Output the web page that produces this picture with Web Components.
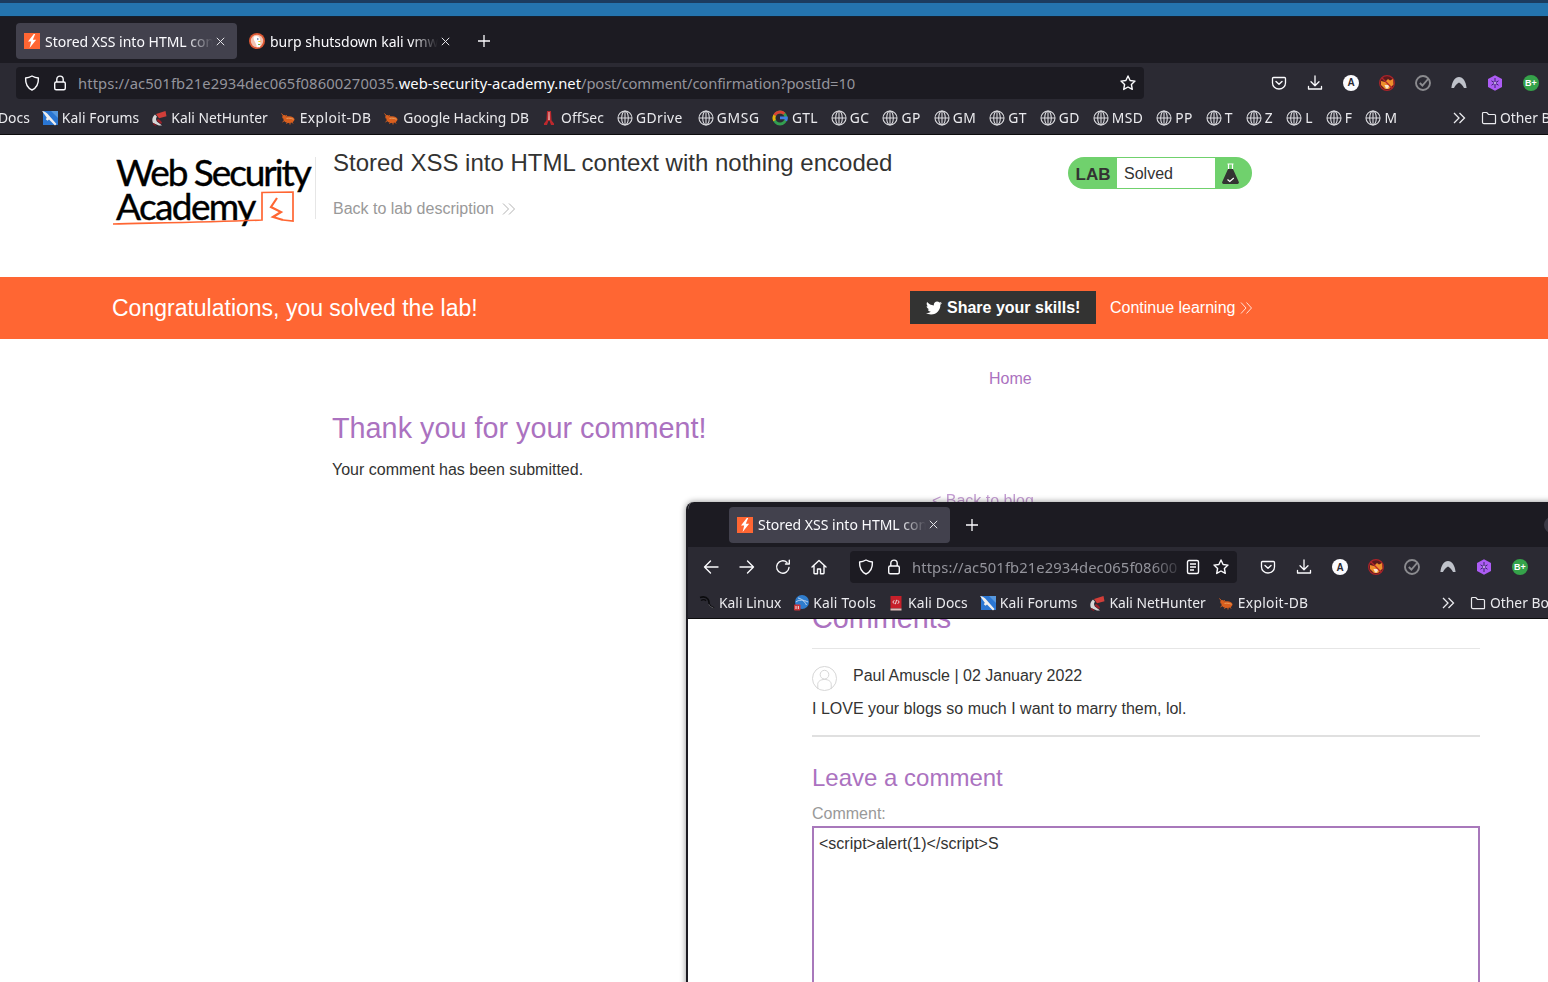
<!DOCTYPE html>
<html lang="en">
<head>
<meta charset="utf-8">
<title>Stored XSS into HTML context with nothing encoded</title>
<style>
  html, body { margin: 0; height: 100%; overflow: hidden; background: #fff; }
  body { position: relative; display: flex; flex-direction: column; width: 1548px; height: 982px; font-family: "Liberation Sans", Arial, sans-serif; color: #333332; }
  .s1 { letter-spacing: .1px; }
  .s2 { letter-spacing: .2px; }
  .s3 { letter-spacing: .3px; }
  .s4 { letter-spacing: .4px; }
</style>
</head>
<body>

<desk-strip></desk-strip>

<fx-window class="main" other="Other B" style="--tabs-left:16px;--tabs-h:46px;--tabs-top:2px;--nav-h:38px;--nav-top:1px;--marks-h:34px;--nav-left:16px;--url-w:1128px;--tools-left:127px;--marks-left:-2px;--marks-w:1453px;--folder-gap:3px;">
  <fx-tab slot="tabs" active icon="burp" label="Stored XSS into HTML con"></fx-tab>
  <fx-tab slot="tabs" icon="duck" label="burp shutsdown kali vmw"></fx-tab>
  <fx-url slot="url" base="https://ac501fb21e2934dec065f08600270035." host="web-security-academy.net" path="/post/comment/confirmation?postId=10"></fx-url>
  <fx-mark slot="marks" label="Docs"></fx-mark>
  <fx-mark slot="marks" class="s1" icon="forums" label="Kali Forums"></fx-mark>
  <fx-mark slot="marks" icon="nethunter" label="Kali NetHunter"></fx-mark>
  <fx-mark slot="marks" class="s4" icon="exploit" label="Exploit-DB"></fx-mark>
  <fx-mark slot="marks" icon="exploit" label="Google Hacking DB"></fx-mark>
  <fx-mark slot="marks" class="s1" icon="offsec" label="OffSec"></fx-mark>
  <fx-mark slot="marks" icon="globe" label="GDrive"></fx-mark>
  <fx-mark slot="marks" icon="globe" label="GMSG" style="margin-left:3px;letter-spacing:.7px"></fx-mark>
  <fx-mark slot="marks" class="s3" icon="google" label="GTL"></fx-mark>
  <fx-mark slot="marks" icon="globe" label="GC"></fx-mark>
  <fx-mark slot="marks" icon="globe" label="GP"></fx-mark>
  <fx-mark slot="marks" icon="globe" label="GM"></fx-mark>
  <fx-mark slot="marks" icon="globe" label="GT"></fx-mark>
  <fx-mark slot="marks" icon="globe" label="GD"></fx-mark>
  <fx-mark slot="marks" icon="globe" label="MSD"></fx-mark>
  <fx-mark slot="marks" icon="globe" label="PP"></fx-mark>
  <fx-mark slot="marks" icon="globe" label="T"></fx-mark>
  <fx-mark slot="marks" icon="globe" label="Z"></fx-mark>
  <fx-mark slot="marks" icon="globe" label="L"></fx-mark>
  <fx-mark slot="marks" icon="globe" label="F"></fx-mark>
  <fx-mark slot="marks" icon="globe" label="M"></fx-mark>

  <lab-header title-text="Stored XSS into HTML context with nothing encoded"></lab-header>
  <lab-banner></lab-banner>
  <blog-confirmation></blog-confirmation>
</fx-window>

<fx-window class="popup" controls other="Other Bo" style="position:absolute;left:686px;top:502px;width:920px;height:520px;--tabs-left:41px;--tabs-h:45px;--tabs-top:0px;--nav-h:40px;--nav-top:0px;--marks-h:32px;--nav-left:6px;--url-w:387px;--tools-left:23px;--marks-left:11px;--marks-w:741px;--folder-gap:4px;--edge:2px;--radius:8px;">
  <fx-tab slot="tabs" active icon="burp" label="Stored XSS into HTML con"></fx-tab>
  <fx-nav slot="nav"></fx-nav>
  <fx-url slot="url" reader base="https://ac501fb21e2934dec065f08600" host="" path=""></fx-url>
  <fx-mark slot="marks" icon="kali" label="Kali Linux"></fx-mark>
  <fx-mark slot="marks" class="s2" icon="tools" label="Kali Tools"></fx-mark>
  <fx-mark slot="marks" class="s1" icon="docs" label="Kali Docs"></fx-mark>
  <fx-mark slot="marks" class="s1" icon="forums" label="Kali Forums"></fx-mark>
  <fx-mark slot="marks" icon="nethunter" label="Kali NetHunter"></fx-mark>
  <fx-mark slot="marks" class="s3" icon="exploit" label="Exploit-DB"></fx-mark>

  <blog-comments></blog-comments>
</fx-window>

<script>
// every icon lives here so fx-icon can stamp them by name
const ICONS = {
  burp: '<rect width="16" height="16" fill="#ff6633"/><path d="M9.8 1 4 8.600h3.200L5.600 15l6.600-8.200H8.800L11.200 1z" fill="#fff"/>',
  duck: '<circle cx="8" cy="8" r="8" fill="#de5833"/><circle cx="8" cy="8" r="6.200" fill="#f4c4b2"/><path d="M5 3.600c2-1.200 5-.7 5.800 1.700.5 1.500.1 3 .6 4.600.3 1.200 0 3.100-.4 4.400H7.600c.2-1.800-.7-3.600-1.600-5.300C5 7 4 5 5 3.600z" fill="#fff"/><circle cx="8.800" cy="6" r=".8" fill="#2d4f8e"/><path d="M8.800 8.200c1-.4 2.300-.3 3.200 0-.3.9-1.800 1.100-3.200.4z" fill="#fdd20a"/><path d="M9 10.800c.7.300 1.600.300 2.200 0V12c-.8.100-1.600 0-2.200-.3z" fill="#65bc46"/>',
  globe: '<g fill="none" stroke="#e8e8ec" stroke-width="1.100"><circle cx="8" cy="8" r="7"/><ellipse cx="8" cy="8" rx="3.300" ry="7"/><path d="M8 1v14M1 8h14"/></g>',
  google: '<circle cx="8" cy="8" r="6" fill="none" stroke="#34a853" stroke-width="2.800"/><path d="M2.600 5.400A6 6 0 0 1 12.300 3.800" fill="none" stroke="#ea4335" stroke-width="2.800"/><path d="M2.500 10.600a6 6 0 0 1 .1-5.200" fill="none" stroke="#fbbc05" stroke-width="2.800"/><path d="M8 6.500h7.700c.3 1.700.1 3.300-.6 4.700l-2.500-1c.3-.4.400-.8.500-1H8z" fill="#4285f4"/>',
  forums: '<rect x="1" y="1" width="15" height="14" fill="#2a7de1"/><path d="M9 1h7v7z" fill="#5aa2ee"/><path d="M0 1c3 .4 5.300 2 6.800 4.300l7.700 8.700-1.500 1.500-6-6-1.500 1.300-1.700-1.600 1-1.400C3.500 5.700 1.600 3.500 0 1z" fill="#fff"/>',
  nethunter: '<path d="M5 4 14.500 1l1 5.200L8 8.200z" fill="#e0403a"/><path d="M4 4.500C1.500 6.500.5 10 2 13l6 2.500h3l-4.500-3.500C4.800 10.500 4.500 8 6 6.800z" fill="#e6e6e6"/><path d="M6.500 9c1.500 0 3 1.200 4.500 3.500l-1 1.500L6 11z" fill="#a81f28"/><path d="M2 13.500 5 15.500" stroke="#8c1820" stroke-width="1.500"/>',
  exploit: '<g fill="#e8641d"><ellipse cx="9" cy="9.600" rx="5.500" ry="3.300"/><circle cx="4.200" cy="7" r="2"/></g><path d="M1.500 3.500l2.500 3M2.500 12l2.500-2M6.500 13.800l1.500-2M10 14.500V12.500M13 13.500l-1.500-2M6 5l1.500 2.500" stroke="#e8641d" stroke-width="1" fill="none"/><path d="M6.500 8.500c2.500-.6 4.500-.3 7 .8" stroke="#f7a65f" fill="none"/>',
  offsec: '<path d="M6 1h4l.6 9.500 2.400 3V15h-3L8.600 11H7.400L6 15H3v-1.500l2.400-3z" fill="#c9282d"/><path d="M7.400 2h1.200l.3 8H7.100z" fill="#f4a8a2"/>',
  kali: '<path d="M1 2.500c3-1 6.500-.3 8 1.700 1.300 1.700.8 3.500 1.300 5 .6 1.500 2.200 2.600 4.700 3.800" fill="none" stroke="#09090b" stroke-width="1.600"/><path d="M2 5.500c1.600-1 3.800-1 5 .2" fill="none" stroke="#09090b" stroke-width="1.300"/><path d="M9.800 9.300c.6 1.500 2.200 2.800 4.700 3.800" fill="none" stroke="#77777d" stroke-width=".8"/>',
  tools: '<circle cx="9" cy="7" r="7" fill="#3085dc"/><path d="M3 7c3-2.500 7-2.500 12 0M5 3c3 .5 6 2.500 8.500 7" stroke="#cfe6ff" fill="none"/><rect x="1" y="9.500" width="6.500" height="6" rx="1" fill="#d9343a"/><path d="M3 11v3M5.300 11v3" stroke="#fff"/>',
  docs: '<rect x="2.500" y="1" width="11" height="12.500" fill="#d5202a"/><rect x="2.500" y="13.500" width="11" height="2" fill="#f0c9c4"/><path d="M6.300 5.200 4.800 7l1.500 1.800M9.700 5.200 11.200 7 9.700 8.800M8.600 4.800 7.400 9.200" stroke="#fff" fill="none" stroke-width=".9"/>',
  pocket: '<path d="M2.500 2.500h11a1 1 0 0 1 1 1V8a6.500 6 0 0 1-13 0V3.500a1 1 0 0 1 1-1z" fill="none" stroke="#fbfbfe" stroke-width="1.300"/><path d="M5 6.500 8 9.300l3-2.800" fill="none" stroke="#fbfbfe" stroke-width="1.400" stroke-linecap="round" stroke-linejoin="round"/>',
  download: '<path d="M8 1v9.500M4 6.800 8 10.800l4-4M1.500 11.500V14h13v-2.500" fill="none" stroke="#fbfbfe" stroke-width="1.300" stroke-linecap="round" stroke-linejoin="round"/>',
  badgeWhite: '<circle cx="8" cy="8" r="8" fill="#fbfbfe"/>',
  fox: '<circle cx="8" cy="8" r="7.400" fill="#5a1a1c" stroke="#a9242b" stroke-width="1.200"/><path d="M2 6 6 7l3-3 2 1.500L14 4l.5 5.500L10 14H6L2 10z" fill="#ee8f2c"/><path d="M5.500 10h5L9 13.500H7z" fill="#f8e6cc"/><path d="M3 3 13 13" stroke="#b3252c" stroke-width="1.300"/>',
  check: '<circle cx="8" cy="8" r="7" fill="none" stroke="#8b8b8f" stroke-width="1.900"/><path d="M4.800 8 7.400 10.500 13.500 3.500" fill="none" stroke="#8b8b8f" stroke-width="1.900"/>',
  arch: '<path d="M.4 13C1 6.500 4 2 8 2s7 4.500 7.600 11H13C11.800 10.500 10 8.600 8 7.600 6 8.600 4.200 10.500 3 13z" fill="#bfc2ca"/>',
  hex: '<path d="M8 .3 15 4.100v7.800L8 15.700 1 11.900V4.100z" fill="#ad5cf5"/><path d="M8 3v10M4.500 5.800l7 4.400M11.500 5.800l-7 4.400" stroke="#3a2a66" stroke-width="1" fill="none"/><circle cx="8" cy="8" r="1" fill="#e2c8ff"/>',
  badgeGreen: '<circle cx="8" cy="8" r="8" fill="#35a24a"/>'
};

function svg(name, size) {
  return `<svg xmlns="http://www.w3.org/2000/svg" viewBox="0 0 16 16" width="${size}" height="${size}">${ICONS[name] || ''}</svg>`;
}

class DeskStrip extends HTMLElement {
  constructor() {
    super();
    this.attachShadow({ mode: 'open' });
    this.shadowRoot.innerHTML = `
      <style>
        :host { display: block; height: 17px; flex: none; box-sizing: border-box; background: #2474ae; border-top: 3px solid #1c3c5e; border-bottom: 1px solid #14202e; }
      </style>`;
  }
}

class FxIcon extends HTMLElement {
  connectedCallback() {
    const root = this.shadowRoot || this.attachShadow({ mode: 'open' });
    root.innerHTML = `
      <style>
        :host { display: inline-flex; flex: none; position: relative; align-items: center; justify-content: center; }
        svg { display: block; }
      </style>
      ${svg(this.getAttribute('name'), this.getAttribute('size') || 16)}<slot></slot>`;
  }
}

class FxWindow extends HTMLElement {
  constructor() {
    super();
    this.attachShadow({ mode: 'open' });
    this.shadowRoot.innerHTML = `
      <style>
        :host {
          display: flex;
          flex-direction: column;
          font-family: "Noto Sans", sans-serif;
          overflow: hidden;
          background: #fff;
          box-sizing: border-box;
          border-left: var(--edge, 0) solid #1c1b22;
          border-top-left-radius: var(--radius, 0);
          border-top-right-radius: var(--radius, 0);
        }
        :host(.popup) { box-shadow: 0 0 6px rgba(0,0,0,.45); }
        :host(.main) { flex: 1; min-height: 0; }
        #tabs {
          display: flex;
          align-items: center;
          gap: 4px;
          height: var(--tabs-h);
          box-sizing: border-box;
          padding: var(--tabs-top) 0 0 var(--tabs-left);
          background: #1c1b22;
          flex: none;
          position: relative;
        }
        #plus { margin-left: 6px; width: 24px; height: 24px; display: grid; place-items: center; }
        #nav {
          display: flex;
          align-items: center;
          height: var(--nav-h);
          box-sizing: border-box;
          padding: var(--nav-top) 0 0 var(--nav-left);
          background: #2b2a33;
          flex: none;
        }
        #urlslot { display: block; width: var(--url-w); flex: none; }
        #marks {
          display: flex;
          align-items: center;
          height: var(--marks-h);
          box-sizing: border-box;
          background: #2b2a33;
          flex: none;
          border-bottom: 1px solid #0c0c0d;
          overflow: hidden;
        }
        #marklist {
          display: flex;
          align-items: center;
          gap: 12px;
          width: var(--marks-w);
          margin-left: var(--marks-left);
          flex: none;
          box-sizing: border-box;
          overflow: hidden;
        }
        #other { display: flex; align-items: center; flex: none; color: #fbfbfe; font-size: 13.850px; white-space: nowrap; opacity: .92; }
        #other svg { display: block; }
        #more { margin-right: 14px; }
        #folder { margin-right: var(--folder-gap); }
        #page { flex: 1; min-height: 0; overflow: hidden; background: #fff; color: #333332; font-family: "Liberation Sans", Arial, sans-serif; }
        #control { position: absolute; left: 856px; top: 15px; width: 16px; height: 16px; border-radius: 50%; background: #3a3944; }
        #control[hidden] { display: none; }
      </style>
      <div id="tabs">
        <slot name="tabs"></slot>
        <div id="plus">
          <svg width="14" height="14" viewBox="0 0 14 14"><path d="M7 1v12M1 7h12" stroke="#fbfbfe" stroke-width="1.300"/></svg>
        </div>
        <div id="control" hidden></div>
      </div>
      <div id="nav">
        <slot name="nav"></slot>
        <div id="urlslot"><slot name="url"></slot></div>
        <fx-tools></fx-tools>
      </div>
      <div id="marks">
        <div id="marklist"><slot name="marks"></slot></div>
        <div id="other">
          <svg id="more" width="16" height="16" viewBox="0 0 16 16"><path d="M3 3l5 5-5 5M8.500 3l5 5-5 5" fill="none" stroke="#fbfbfe" stroke-width="1.300"/></svg>
          <svg id="folder" width="16" height="16" viewBox="0 0 16 16"><path d="M1.500 12V3.500a1 1 0 0 1 1-1h3.300l1.700 2h6a1 1 0 0 1 1 1V13a.7.7 0 0 1-.7.7H3a1.500 1.500 0 0 1-1.500-1.700z" fill="none" stroke="#fbfbfe" stroke-width="1.200"/></svg>
          <span id="otherlabel"></span>
        </div>
      </div>
      <div id="page"><slot></slot></div>`;
  }
  connectedCallback() {
    if (this.hasAttribute('controls')) this.shadowRoot.getElementById('control').hidden = false;
    this.shadowRoot.getElementById('otherlabel').textContent = this.getAttribute('other');
  }
}

class FxTab extends HTMLElement {
  connectedCallback() {
    const root = this.shadowRoot || this.attachShadow({ mode: 'open' });
    root.innerHTML = `
      <style>
        :host {
          display: flex;
          align-items: center;
          width: 221px;
          height: 36px;
          box-sizing: border-box;
          padding: 0 12px 0 8px;
          border-radius: 4px;
          color: #fbfbfe;
          font-size: 14px;
          flex: none;
        }
        :host([active]) { background: #42414d; }
        #title {
          flex: 1;
          min-width: 0;
          margin-left: 5px;
          white-space: nowrap;
          -webkit-mask-image: linear-gradient(to right, #000 84%, transparent);
          mask-image: linear-gradient(to right, #000 84%, transparent);
        }
        svg#x { display: block; margin-left: 3px; flex: none; }
      </style>
      <fx-icon name="${this.getAttribute('icon')}"></fx-icon>
      <span id="title">${this.getAttribute('label')}</span>
      <svg id="x" width="9" height="9" viewBox="0 0 9 9"><path d="M.8.8l7.400 7.400M8.200.8.800 8.200" stroke="#e4e4e8" stroke-width="1"/></svg>`;
  }
}

class FxNav extends HTMLElement {
  constructor() {
    super();
    this.attachShadow({ mode: 'open' });
    this.shadowRoot.innerHTML = `
      <style>
        :host { display: flex; align-items: center; gap: 20px; padding: 0 23px 0 9px; flex: none; }
        svg { display: block; fill: none; stroke: #fbfbfe; stroke-width: 1.400; stroke-linecap: round; stroke-linejoin: round; }
      </style>
      <svg width="16" height="16" viewBox="0 0 16 16"><path d="M15 8H1.500M7.500 2 1.500 8l6 6"/></svg>
      <svg width="16" height="16" viewBox="0 0 16 16"><path d="M1 8h13.500M8.500 2l6 6-6 6"/></svg>
      <svg width="16" height="16" viewBox="0 0 16 16"><path d="M14 8.500A6.200 6.200 0 1 1 12 3.400M14.300 1.200V5H10.500"/></svg>
      <svg width="16" height="16" viewBox="0 0 16 16"><path d="M1 8 8 1.500 15 8M3 6.500V14a.7.7 0 0 0 .7.700H6.500V10h3v4.700h2.800A.7.7 0 0 0 13 14V6.500"/></svg>`;
  }
}

class FxUrl extends HTMLElement {
  connectedCallback() {
    const root = this.shadowRoot || this.attachShadow({ mode: 'open' });
    const reader = this.hasAttribute('reader');
    root.innerHTML = `
      <style>
        :host {
          display: flex;
          align-items: center;
          height: 32px;
          background: #1c1b22;
          border-radius: 4px;
          color: #94949c;
          font-size: 14.770px;
          box-sizing: border-box;
          padding: 0 8px;
        }
        svg { display: block; flex: none; fill: none; stroke: #fbfbfe; stroke-width: 1.400; stroke-linejoin: round; }
        #lock { margin-left: 12px; }
        #text {
          flex: 1;
          min-width: 0;
          margin-left: 10px;
          white-space: nowrap;
          ${reader ? '-webkit-mask-image: linear-gradient(to right, #000 88%, transparent); mask-image: linear-gradient(to right, #000 88%, transparent);' : ''}
        }
        #base { letter-spacing: .1px; }
        #host { color: #fbfbfe; letter-spacing: .04px; }
        #path { letter-spacing: -.14px; }
        #reader { margin-right: 12px; }
      </style>
      <svg width="16" height="16" viewBox="0 0 16 16"><path d="M8 1c2.200 1.200 4.300 1.800 6.400 2 .2 5.500-1.500 9.800-6.400 12C3.100 12.800 1.400 8.500 1.600 3 3.700 2.800 5.800 2.200 8 1z"/></svg>
      <svg id="lock" width="16" height="16" viewBox="0 0 16 16"><rect x="2.700" y="7" width="10.600" height="7.800" rx="1.500"/><path d="M4.800 7V4.300a3.200 3.200 0 0 1 6.400 0V7"/></svg>
      <span id="text"><span id="base">${this.getAttribute('base')}</span><span id="host">${this.getAttribute('host')}</span><span id="path">${this.getAttribute('path')}</span></span>
      ${reader ? '<svg id="reader" width="16" height="16" viewBox="0 0 16 16"><rect x="2.500" y="1.500" width="11" height="13" rx="1.500"/><path d="M5 5h6M5 8h6M5 11h4"/></svg>' : ''}
      <svg width="16" height="16" viewBox="0 0 16 16"><path d="M8 1l2.100 4.500 4.900.6-3.600 3.400.9 4.900L8 12l-4.300 2.400.9-4.900L1 6.100l4.900-.6z"/></svg>`;
  }
}

class FxTools extends HTMLElement {
  constructor() {
    super();
    this.attachShadow({ mode: 'open' });
    this.shadowRoot.innerHTML = `
      <style>
        :host { display: flex; align-items: center; gap: 20px; padding-left: var(--tools-left); flex: none; }
        span { position: absolute; inset: 0; display: grid; place-items: center; font: 700 9px "Liberation Sans", sans-serif; }
        .a { color: #2b2a33; font-size: 10px; }
        .b { color: #fff; }
      </style>
      <fx-icon name="pocket"></fx-icon>
      <fx-icon name="download"></fx-icon>
      <fx-icon name="badgeWhite"><span class="a">A</span></fx-icon>
      <fx-icon name="fox"></fx-icon>
      <fx-icon name="check"></fx-icon>
      <fx-icon name="arch"></fx-icon>
      <fx-icon name="hex"></fx-icon>
      <fx-icon name="badgeGreen"><span class="b">B+</span></fx-icon>`;
  }
}

class FxMark extends HTMLElement {
  connectedCallback() {
    const root = this.shadowRoot || this.attachShadow({ mode: 'open' });
    const icon = this.getAttribute('icon');
    root.innerHTML = `
      <style>
        :host { display: flex; align-items: center; gap: 4px; color: #fbfbfe; font-size: 13.850px; white-space: nowrap; flex: none; opacity: .92; }
        :host([icon="globe"]) { gap: 3px; margin-left: 1px; letter-spacing: .4px; }
      </style>
      ${icon ? `<fx-icon name="${icon}"></fx-icon>` : ''}
      <span>${this.getAttribute('label')}</span>`;
  }
}

class LabHeader extends HTMLElement {
  connectedCallback() {
    const root = this.shadowRoot || this.attachShadow({ mode: 'open' });
    root.innerHTML = `
      <style>
        :host { display: flex; height: 142px; flex: none; padding: 14px 0 0 112px; box-sizing: border-box; background: #fff; }
        #logo {
          position: relative;
          width: 204px;
          height: 78px;
          box-sizing: border-box;
          flex: none;
          font: 400 37px/35px Lato, sans-serif;
          -webkit-text-stroke: .4px #000;
          color: #000;
          padding: 5px 0 0 4px;
        }
        #logo div { white-space: nowrap; }
        #w1 { letter-spacing: -2.050px; }
        #w2 { letter-spacing: -1.600px; margin-top: -1px; }
        #rule { position: absolute; right: 0; top: 8px; width: 1px; height: 62px; background: #e6e6e6; }
        #mark { position: absolute; left: 0; top: 40px; }
        #titles { width: 752px; padding-left: 17px; box-sizing: border-box; flex: none; }
        h2 { margin: 0; font-size: 24px; font-weight: 400; line-height: 28px; color: #333332; white-space: nowrap; }
        #back { margin-top: 23px; display: flex; align-items: center; gap: 8px; color: #999; font-size: 16px; line-height: 18px; }
        #back svg { display: block; }
      </style>
      <div id="logo">
        <div id="w1">Web Security</div>
        <div id="w2">Academy</div>
        <i id="rule"></i>
        <svg id="mark" width="190" height="40" viewBox="0 0 190 40">
          <path d="M1 35C40 34 100 33 150 31V3.500L181 3v29l-10-1" fill="none" stroke="#ff6633" stroke-width="1.700"/>
          <path d="M165 9l-6 9 10 5-8 5 10 3" fill="none" stroke="#ff6633" stroke-width="2.200"/>
        </svg>
      </div>
      <div id="titles">
        <h2>${this.getAttribute('title-text')}</h2>
        <div id="back">Back to lab description
          <svg width="14" height="14" viewBox="0 0 14 14"><path d="M1 1.500 6.500 7 1 12.500M7 1.500 12.500 7 7 12.500" fill="none" stroke="#b3b3b3" stroke-width="1"/></svg>
        </div>
      </div>
      <lab-status></lab-status>`;
  }
}

class LabStatus extends HTMLElement {
  constructor() {
    super();
    this.attachShadow({ mode: 'open' });
    this.shadowRoot.innerHTML = `
      <style>
        :host {
          display: flex;
          align-items: stretch;
          align-self: flex-start;
          width: 184px;
          height: 32px;
          margin-top: 8px;
          box-sizing: border-box;
          border-radius: 16px;
          background: #70d16d;
          padding: 1px 0;
          overflow: hidden;
          flex: none;
        }
        #lab { width: 49px; text-align: center; font-weight: 700; font-size: 17px; line-height: 33px; color: #333332; padding-left: 1px; box-sizing: border-box; }
        #state { width: 98px; background: #fff; padding-left: 7px; box-sizing: border-box; font-size: 16px; line-height: 31px; color: #333332; }
        #flask { flex: 1; display: flex; align-items: center; padding-left: 7px; }
        svg { display: block; }
      </style>
      <div id="lab">LAB</div>
      <div id="state">Solved</div>
      <div id="flask">
        <svg width="17" height="21" viewBox="0 0 17 21">
          <path d="M5.500 1h6M6.500 1v6M10.500 1v6" stroke="#fff" stroke-width="1.200" fill="none"/>
          <path d="M6 6h5l5.700 12.800A1.500 1.500 0 0 1 15.300 21H1.700A1.500 1.500 0 0 1 .3 18.800z" fill="#333332"/>
          <path d="M5.500 16.500l2.300 2 4-3.500" stroke="#fff" stroke-width="1.200" fill="none"/>
        </svg>
      </div>`;
  }
}

class LabBanner extends HTMLElement {
  constructor() {
    super();
    this.attachShadow({ mode: 'open' });
    this.shadowRoot.innerHTML = `
      <style>
        :host {
          display: flex;
          align-items: center;
          height: 62px;
          flex: none;
          padding-left: 112px;
          background: #ff6633;
          color: #fff;
          box-sizing: border-box;
        }
        h4 { margin: 0; width: 798px; font-size: 23px; font-weight: 400; flex: none; white-space: nowrap; }
        #share {
          display: flex;
          align-items: center;
          gap: 5px;
          width: 186px;
          height: 33px;
          margin-top: -1px;
          box-sizing: border-box;
          padding-left: 16px;
          background: #333332;
          font-size: 16px;
          font-weight: 700;
          flex: none;
        }
        #more { display: flex; align-items: center; gap: 5px; margin-left: 14px; font-size: 16px; }
        svg { display: block; }
      </style>
      <h4>Congratulations, you solved the lab!</h4>
      <div id="share">
        <svg width="16" height="16" viewBox="0 0 512 512"><path fill="#fff" d="M459.37 151.716c.325 4.548.325 9.097.325 13.645 0 138.72-105.583 298.558-298.558 298.558-59.452 0-114.68-17.219-161.137-47.106 8.447.974 16.568 1.299 25.34 1.299 49.055 0 94.213-16.568 130.274-44.832-46.132-.975-84.792-31.188-98.112-72.772 6.498.974 12.995 1.624 19.818 1.624 9.421 0 18.843-1.3 27.614-3.573-48.081-9.747-84.143-51.98-84.143-102.985v-1.299c13.969 7.797 30.214 12.67 47.431 13.319-28.264-18.843-46.781-51.005-46.781-87.391 0-19.492 5.197-37.36 14.294-52.954 51.655 63.675 129.3 105.258 216.365 109.807-1.624-7.797-2.599-15.918-2.599-24.04 0-57.828 46.782-104.934 104.934-104.934 30.213 0 57.502 12.67 76.67 33.137 23.715-4.548 46.456-13.32 66.599-25.34-7.798 24.366-24.366 44.833-46.132 57.827 21.117-2.273 41.584-8.122 60.426-16.243-14.292 20.791-32.161 39.308-52.628 54.253z"/></svg>
        Share your skills!
      </div>
      <div id="more">Continue learning
        <svg width="13" height="14" viewBox="0 0 13 14"><path d="M1 1.500 6 7l-5 5.500M6.500 1.500 11.500 7l-5 5.500" fill="none" stroke="#fff" stroke-opacity=".8" stroke-width="1"/></svg>
      </div>`;
  }
}

class BlogConfirmation extends HTMLElement {
  constructor() {
    super();
    this.attachShadow({ mode: 'open' });
    this.shadowRoot.innerHTML = `
      <style>
        :host { display: block; font-size: 16px; padding-left: 332px; width: 1300px; box-sizing: border-box; }
        a { color: #ab72c0; text-decoration: none; display: block; line-height: 18px; }
        #home { padding: 31px 0 0; margin-left: 657px; }
        h1 { margin: 23px 0 0; font-size: 28.800px; font-weight: 400; line-height: 34px; color: #ab72c0; }
        p { margin: 16px 0 0; line-height: 18px; color: #333332; }
        #back { margin: 13px 0 0 600px; opacity: .7; }
      </style>
      <a id="home">Home</a>
      <h1>Thank you for your comment!</h1>
      <p>Your comment has been submitted.</p>
      <a id="back">&lt; Back to blog</a>`;
  }
}

class BlogComments extends HTMLElement {
  constructor() {
    super();
    this.attachShadow({ mode: 'open' });
    this.shadowRoot.innerHTML = `
      <style>
        :host { display: block; width: 668px; margin: -16px 0 0 124px; font-size: 16px; color: #333332; }
        h3 { margin: 0; font-size: 28.800px; font-weight: 400; line-height: 30px; color: #ab72c0; }
        #top { height: 1px; background: #e6e6e6; margin-top: 15px; }
        #who { display: flex; align-items: center; gap: 16px; margin-top: 16px; height: 26px; }
        #who svg { display: block; flex: none; }
        #who span { line-height: 18px; margin-top: -4px; }
        p { margin: 9px 0 0; line-height: 18px; }
        #end { height: 2px; background: #e0e0e0; margin-top: 17px; }
        #leave { margin-top: 26px; font-size: 24px; }
        label { display: block; margin-top: 12px; color: #999; line-height: 18px; }
        #box { margin-top: 3px; height: 300px; border: 2px solid #a878bb; box-sizing: border-box; padding: 7px 5px; line-height: 18px; }
      </style>
      <h3>Comments</h3>
      <div id="top"></div>
      <div id="who">
        <svg width="25" height="25" viewBox="0 0 26 26" fill="none" stroke="#d4d4d4"><circle cx="13" cy="13" r="12.500"/><circle cx="13" cy="9" r="4.500"/><path d="M6 24v-5c0-3 3-5 7-5s7 2 7 5v5"/></svg>
        <span>Paul Amuscle | 02 January 2022</span>
      </div>
      <p>I LOVE your blogs so much I want to marry them, lol.</p>
      <div id="end"></div>
      <h3 id="leave">Leave a comment</h3>
      <label>Comment:</label>
      <div id="box">&lt;script&gt;alert(1)&lt;/script&gt;S</div>`;
  }
}

customElements.define('desk-strip', DeskStrip);
customElements.define('fx-icon', FxIcon);
customElements.define('fx-window', FxWindow);
customElements.define('fx-tab', FxTab);
customElements.define('fx-nav', FxNav);
customElements.define('fx-url', FxUrl);
customElements.define('fx-tools', FxTools);
customElements.define('fx-mark', FxMark);
customElements.define('lab-status', LabStatus);
customElements.define('lab-header', LabHeader);
customElements.define('lab-banner', LabBanner);
customElements.define('blog-confirmation', BlogConfirmation);
customElements.define('blog-comments', BlogComments);
</script>
</body>
</html>
